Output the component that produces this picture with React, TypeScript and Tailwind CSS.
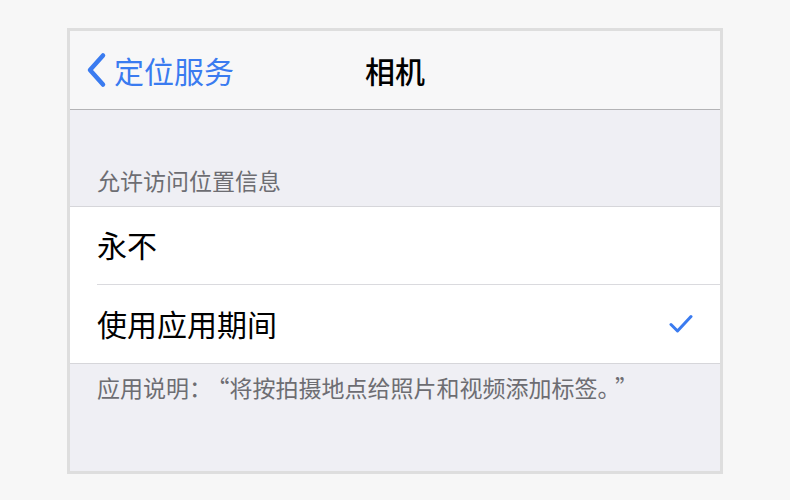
import React from 'react';

const blue = 'text-[#3a7bf0]';

const Row = ({ label, checked, last }: { label: string; checked?: boolean; last?: boolean }) => (
  <div className="bg-white pl-[27px]">
    <div className={`flex h-[78px] items-center pr-[27px] ${last ? '' : 'border-b border-[#dadade]'}`}>
      <span className="flex-1 pb-[3px] text-[30px] leading-none text-black">{label}</span>
      {checked && (
        <svg width="24" height="20" viewBox="0 0 24 20" className={blue}>
          <path d="M2 10.5 L8.5 17 L22 2.5" fill="none" stroke="currentColor" strokeWidth="3" strokeLinecap="round" strokeLinejoin="round" />
        </svg>
      )}
    </div>
  </div>
);

export default function App() {
  return (
    <div
      className="flex h-[500px] w-[790px] justify-center bg-[#f7f7f7] pt-[28px]"
      style={{ fontFamily: '"Noto Sans CJK SC", "Noto Sans", sans-serif' }}
    >
      <div className="flex h-[446px] w-[656px] flex-col border-[3px] border-[#dedede] bg-[#efeff4]">
        {/* nav bar */}
        <div className="grid h-[79px] grid-cols-[1fr_auto_1fr] items-center border-b border-[#b3b3b6] bg-[#f7f7f8]">
          <div className={`flex items-center gap-[7px] pl-[15px] ${blue}`}>
            <svg width="22" height="36" viewBox="0 0 22 36">
              <path d="M18 3.5 L5 18 L18 32.5" fill="none" stroke="currentColor" strokeWidth="4.5" strokeLinecap="round" strokeLinejoin="round" />
            </svg>
            <span className="text-[30px] leading-none">定位服务</span>
          </div>
          <div className="text-[30px] font-medium leading-none text-black">相机</div>
          <div />
        </div>

        {/* section header */}
        <div className="h-[97px] border-b border-[#d6d6da] pl-[27px] pt-[59px]">
          <span className="text-[23px] leading-[23px] text-[#6d6d72]">允许访问位置信息</span>
        </div>

        <Row label="永不" />
        <Row label="使用应用期间" checked last />

        {/* footer */}
        <div className="border-t border-[#d6d6da] pl-[27px] pt-[12px]">
          <span className="text-[23px] leading-[23px] text-[#6d6d72]">
            应用说明：<span className="ml-[6px]">“</span>将按拍摄地点给照片和视频添加标签。<span className="ml-[6px]">”</span>
          </span>
        </div>
      </div>
    </div>
  );
}
